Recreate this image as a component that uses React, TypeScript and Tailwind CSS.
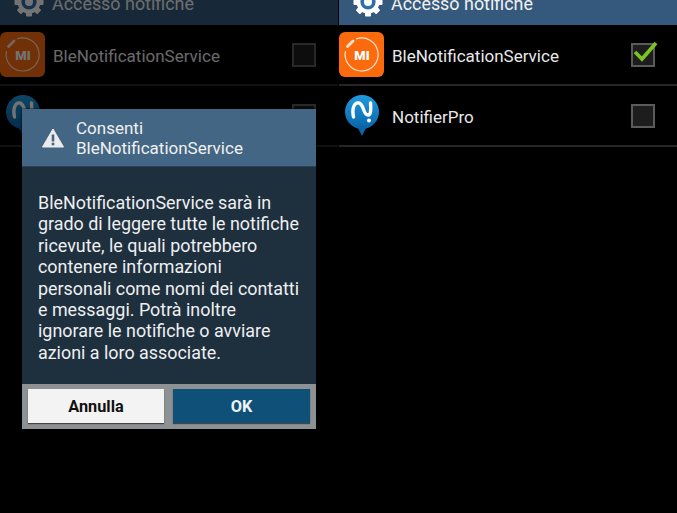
import React from "react";

const GearIcon = () => (
  <svg width="30" height="30" viewBox="0 0 30 30" className="shrink-0">
    <g fill="#fff">
      {[0, 45, 90, 135, 180, 225, 270, 315].map((a) => (
        <rect key={a} x="12" y="0.5" width="6" height="6" rx="1" transform={`rotate(${a} 15 15)`} />
      ))}
      <circle cx="15" cy="15" r="11.5" />
    </g>
    <circle cx="15" cy="15" r="7.6" fill="#2f6fa8" />
    <circle cx="15" cy="15" r="4" fill="#fff" />
  </svg>
);

const MiIcon = () => (
  <div className="w-[45px] h-[45px] rounded-[6px] bg-[#fb6a0c] shrink-0">
    <svg width="45" height="45" viewBox="0 0 45 45">
      <path d="M17 7 A16.5 16.5 0 1 1 6.5 19" fill="none" stroke="#fde3cf" strokeWidth="1.2" />
      <path d="M8.5 14.5 L14 9" stroke="#fde3cf" strokeWidth="2.8" strokeLinecap="round" />
      <text x="23" y="28" textAnchor="middle" fontFamily="Roboto, sans-serif" fontWeight="900" fontSize="13" fill="#fff">
        MI
      </text>
    </svg>
  </div>
);

const NotifierIcon = () => (
  <svg width="36" height="42" viewBox="0 0 36 42" className="shrink-0">
    <defs>
      <linearGradient id="pin" x1="0" y1="0" x2="0" y2="1">
        <stop offset="0" stopColor="#1f9be0" />
        <stop offset="1" stopColor="#0b63a8" />
      </linearGradient>
    </defs>
    <circle cx="18" cy="17" r="17" fill="url(#pin)" />
    <path d="M13 31 L18 41 L23 31 Z" fill="#0b63a8" />
    <path d="M9.5 22 C7.5 12 11 7 15 8 C20 9 19 20 24 20 C27 20 27 14 26.5 8" fill="none" stroke="#fff" strokeWidth="3.4" strokeLinecap="round" />
    <circle cx="25" cy="25.5" r="2" fill="#fff" />
  </svg>
);

const CheckBox = ({ checked }: { checked: boolean }) => (
  <div className="relative w-[24px] h-[24px] border-2 border-[#5b5b5b] bg-[#1d1d1d]">
    {checked && (
      <svg width="26" height="22" viewBox="0 0 26 22" className="absolute left-[0px] top-[-4px]">
        <path d="M2 11 L9 18 L23 2" fill="none" stroke="#7cc520" strokeWidth="3.6" />
      </svg>
    )}
  </div>
);

const Row = ({ icon, label, checked }: { icon: React.ReactNode; label: string; checked: boolean }) => (
  <div className="flex items-center h-[61px] border-b-2 border-[#262626] text-[#e8e8e8]">
    <div className="w-[45px] flex justify-center shrink-0">{icon}</div>
    <span className="ml-[8px] flex-1 text-[17px] pt-[5px]">{label}</span>
    <div className="mr-[22px]">
      <CheckBox checked={checked} />
    </div>
  </div>
);

const Panel = ({ checked }: { checked: boolean }) => (
  <div className="flex flex-col">
    <div className="h-[25px] bg-[#34597c] overflow-hidden flex items-end pl-[14px] text-white">
      <div className="mb-[8px]">
        <GearIcon />
      </div>
      <span className="ml-[8px] mb-[11px] text-[17.9px] leading-[20px] text-[#f2f2f2]">Accesso notifiche</span>
    </div>
    <Row icon={<MiIcon />} label="BleNotificationService" checked={checked} />
    <Row icon={<NotifierIcon />} label="NotifierPro" checked={false} />
  </div>
);

export default function App() {
  return (
    <div className="w-[677px] h-[513px] bg-black overflow-hidden flex font-['Roboto',sans-serif]">
      <div className="relative w-[338px] h-full shrink-0">
        <Panel checked={false} />
        {/* dim layer under the dialog */}
        <div className="absolute inset-0 bg-black/55" />
        <div className="absolute left-[22px] top-[109px] w-[294px] flex flex-col shadow-[0_0_2px_#000]">
          <div className="h-[58px] bg-[#436684] flex items-center pl-[20px] border-b border-[#2b4358]">
            <svg width="22" height="20" viewBox="0 0 22 20" className="shrink-0">
              <path d="M11 1 L21.5 19 H0.5 Z" fill="#ececec" stroke="#ececec" strokeLinejoin="round" />
              <rect x="9.7" y="6.5" width="2.6" height="7" fill="#436684" />
              <rect x="9.7" y="14.7" width="2.6" height="2.6" fill="#436684" />
            </svg>
            <div className="ml-[12px] text-[17px] leading-[20px] pt-[1px] text-[#f0f0f0] whitespace-nowrap">
              Consenti
              <br />
              BleNotificationService
            </div>
          </div>
          <div className="h-[217px] bg-[#1e2f3e] px-[16px] pt-[25px] text-[17.9px] leading-[21.4px] text-[#eef0f1] whitespace-nowrap">
            BleNotificationService sarà in
            <br />
            grado di leggere tutte le notifiche
            <br />
            ricevute, le quali potrebbero
            <br />
            contenere informazioni
            <br />
            personali come nomi dei contatti
            <br />
            e messaggi. Potrà inoltre
            <br />
            ignorare le notifiche o avviare
            <br />
            azioni a loro associate.
          </div>
          <div className="h-[45px] bg-[#8e9193] flex gap-[9px] pl-[6px] pt-[5px] pb-[6px]">
            <button className="w-[136px] bg-[#f3f3f3] text-[#111] text-[16.3px] font-bold pt-[3px] shadow-[0_1px_1px_#444]">Annulla</button>
            <button className="w-[137px] bg-[#0f5079] text-[#eef3f6] text-[16.3px] font-bold pt-[3px] shadow-[0_1px_1px_#444]">OK</button>
          </div>
        </div>
      </div>
      <div className="ml-[1px] flex-1">
        <Panel checked={true} />
      </div>
    </div>
  );
}
